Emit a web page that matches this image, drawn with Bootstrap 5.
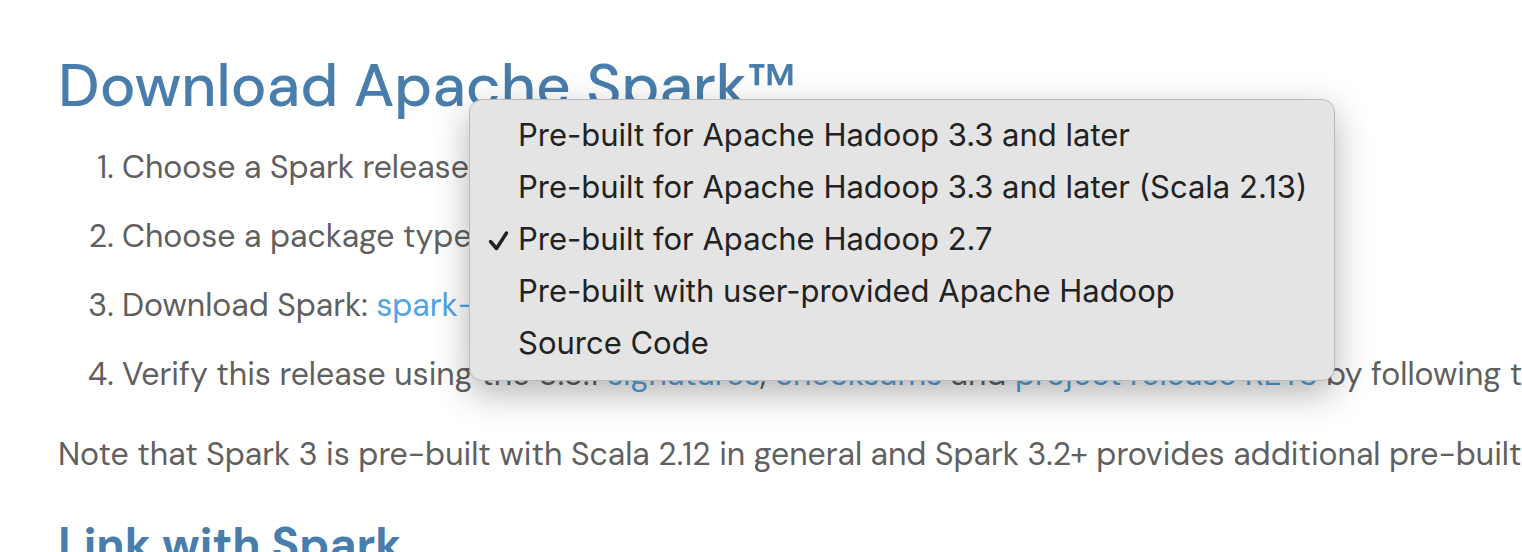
<!DOCTYPE html>
<html lang="en">
<head>
<meta charset="utf-8">
<meta name="viewport" content="width=device-width, initial-scale=1">
<title>Download Apache Spark</title>
<link rel="stylesheet" href="https://cdn.jsdelivr.net/npm/bootstrap@5.3.0/dist/css/bootstrap.min.css">
<style>
  body { font: 400 32px/48px "DM Sans", Inter, "Liberation Sans", sans-serif; color: #606060; height: 100vh; overflow: hidden; }
  main { padding: 50px 0 0 58px; white-space: nowrap; }
  h1, h2 { color: #487dac; }
  h1 { font-size: 60px; line-height: 72px; font-weight: 500; margin-bottom: 21px; }
  h2 { font-size: 46px; line-height: 60px; font-weight: 700; }
  a { color: #51a3e3; text-decoration: none; }
  .steps { padding-left: 64px; margin-bottom: 32px; }
  .steps li + li { margin-top: 21px; }
  .note { margin-bottom: 36px; }
  .picker { position: relative; }
  .package-menu {
    display: block; left: 347px; top: -113px; min-width: 0; padding: 9px 0 11px;
    font: 400 31px/52px Inter, "Liberation Sans", sans-serif;
    --bs-dropdown-bg: #e4e4e4; border: 1px solid #b9b9b9; border-radius: 13px;
    box-shadow: 0 12px 36px rgba(0, 0, 0, .3);
  }
  .package-menu .dropdown-item { display: flex; align-items: center; padding: 0 27px 0 18px; color: #222; }
  .tick { flex: none; width: 30px; height: 24px; }
</style>
</head>
<body class="bg-white">
<main>
  <h1>Download Apache Spark™</h1>
  <ol class="steps">
    <li>Choose a Spark release:</li>
    <li class="picker">Choose a package type:
      <div class="dropdown-menu show package-menu" role="listbox" aria-label="Package type">
        <button type="button" class="dropdown-item" role="option" aria-selected="false"><span class="tick"></span>Pre-built for Apache Hadoop 3.3 and later</button>
        <button type="button" class="dropdown-item" role="option" aria-selected="false"><span class="tick"></span>Pre-built for Apache Hadoop 3.3 and later (Scala 2.13)</button>
        <button type="button" class="dropdown-item" role="option" aria-selected="true"><svg class="tick" viewBox="0 0 30 24" fill="none" stroke="#222" stroke-width="3.500" stroke-linecap="round" stroke-linejoin="round" aria-hidden="true"><path d="M2.500 14.500l6 7 10-15.500"/></svg>Pre-built for Apache Hadoop 2.7</button>
        <button type="button" class="dropdown-item" role="option" aria-selected="false"><span class="tick"></span>Pre-built with user-provided Apache Hadoop</button>
        <button type="button" class="dropdown-item" role="option" aria-selected="false"><span class="tick"></span>Source Code</button>
      </div>
    </li>
    <li>Download Spark: <a href="#download">spark-</a></li>
    <li>Verify this release using the 3.3.1 <a href="#sig">signatures</a>, <a href="#sums">checksums</a> and <a href="#keys">project release KEYS</a> by following th</li>
  </ol>
  <p class="note">Note that Spark 3 is pre-built with Scala 2.12 in general and Spark 3.2+ provides additional pre-built</p>
  <h2>Link with Spark</h2>
</main>
<script src="https://cdn.jsdelivr.net/npm/bootstrap@5.3.0/dist/js/bootstrap.bundle.min.js"></script>
</body>
</html>
